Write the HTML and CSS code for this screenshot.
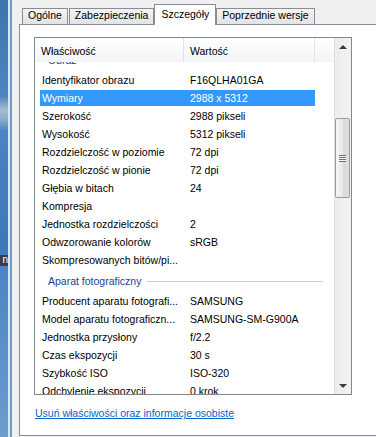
FILE: index.html
```html
<!DOCTYPE html>
<html lang="pl">
<head>
  <meta charset="UTF-8">
  <title>Właściwości: Szczegóły</title>
  <link rel="stylesheet" href="styles.css">
</head>
<body>
  <!-- krawędź okna -->
  <div class="frame">
    <div class="frame-glass"><span class="frame-label">n</span></div>
    <div class="frame-edge"></div>
  </div>

  <div class="dialog">
    <!-- zakładki -->
    <div class="tabs">
      <div class="tab tab-first">Ogólne</div>
      <div class="tab">Zabezpieczenia</div>
      <div class="tab tab-active">Szczegóły</div>
      <div class="tab">Poprzednie wersje</div>
    </div>

    <div class="panel">
      <div class="listview">
        <div class="list-main">
          <div class="list-header">
            <div class="col col-name">Właściwość</div>
            <div class="col col-value">Wartość</div>
            <div class="col col-rest"></div>
          </div>

          <div class="list-body">
            <div class="list-scroll">
              <div class="group"><span>Obraz</span><i class="group-line"></i></div>
              <div class="row"><span class="name">Identyfikator obrazu</span><span class="value">F16QLHA01GA</span></div>
              <div class="row selected"><span class="name">Wymiary</span><span class="value">2988 x 5312</span></div>
              <div class="row"><span class="name">Szerokość</span><span class="value">2988 pikseli</span></div>
              <div class="row"><span class="name">Wysokość</span><span class="value">5312 pikseli</span></div>
              <div class="row"><span class="name">Rozdzielczość w poziomie</span><span class="value">72 dpi</span></div>
              <div class="row"><span class="name">Rozdzielczość w pionie</span><span class="value">72 dpi</span></div>
              <div class="row"><span class="name">Głębia w bitach</span><span class="value">24</span></div>
              <div class="row"><span class="name">Kompresja</span><span class="value"></span></div>
              <div class="row"><span class="name">Jednostka rozdzielczości</span><span class="value">2</span></div>
              <div class="row"><span class="name">Odwzorowanie kolorów</span><span class="value">sRGB</span></div>
              <div class="row"><span class="name">Skompresowanych bitów/pi...</span><span class="value"></span></div>

              <div class="group"><span>Aparat fotograficzny</span><i class="group-line"></i></div>
              <div class="row"><span class="name">Producent aparatu fotografi...</span><span class="value">SAMSUNG</span></div>
              <div class="row"><span class="name">Model aparatu fotograficzn...</span><span class="value">SAMSUNG-SM-G900A</span></div>
              <div class="row"><span class="name">Jednostka przysłony</span><span class="value">f/2.2</span></div>
              <div class="row"><span class="name">Czas ekspozycji</span><span class="value">30 s</span></div>
              <div class="row"><span class="name">Szybkość ISO</span><span class="value">ISO-320</span></div>
              <div class="row"><span class="name">Odchylenie ekspozycji</span><span class="value">0 krok</span></div>
            </div>
          </div>
        </div>

        <!-- pasek przewijania -->
        <div class="scrollbar">
          <div class="sb-btn"><span class="arrow-up"></span></div>
          <div class="sb-track">
            <div class="sb-thumb"><span class="grip"></span></div>
          </div>
          <div class="sb-btn"><span class="arrow-down"></span></div>
        </div>
      </div>

      <a class="remove-link" href="#">Usuń właściwości oraz informacje osobiste</a>
    </div>
  </div>
</body>
</html>
```

FILE: styles.css
```css
body {
  font-family: "Segoe UI", "Liberation Sans", Arial, sans-serif;
  font-size: 10.5px;
  color: #000;
  background-color: #f0f0f0;
  margin: 0;
  width: 376px;
  height: 437px;
  overflow: hidden;
  display: flex;
}
.frame {
  display: flex;
  width: 12px;
  flex-shrink: 0;
}
.frame-glass {
  width: 8px;
  background: linear-gradient(to bottom, #3f75ae 0, #4d84bf 22%, #a4bccf 25%, #8fb0cc 27%, #4a84c2 30%, #3d78b8 57%, #4c86c3 62%, #6d9cce 100%);
}
.frame-label {
  display: block;
  margin-top: 255px;
  height: 11px;
  background-color: #3a3f46;
  color: #fff;
  font-size: 10px;
  line-height: 10px;
  text-align: right;
  overflow: hidden;
}
.frame-edge {
  width: 4px;
  background: linear-gradient(to right, #d9e5f1 0, #d9e5f1 2px, #6f98c6 2px, #6f98c6 4px);
}
.dialog {
  flex: 1;
  min-width: 0;
  padding: 4px 0 0 7px;
}
.tabs {
  display: flex;
  align-items: flex-end;
  height: 20px;
  padding-left: 3px;
}
.tab {
  height: 14px;
  padding: 0 5px 1px;
  line-height: 13px;
  border: 1px solid #898c95;
  border-bottom: none;
  background: linear-gradient(#f4f4f4, #e2e3e5);
  color: #000;
  white-space: nowrap;
}
.tab-first {
  margin-right: 1px;
}
.tab-active {
  position: relative;
  z-index: 1;
  height: 20px;
  line-height: 18px;
  padding: 0 6px;
  margin-bottom: -1px;
  background: #fff;
}
.panel {
  box-sizing: border-box;
  height: 412px;
  margin-right: -20px;
  padding: 12px 0 0 14px;
  border: 1px solid #898c95;
  background-color: #fff;
}
.listview {
  box-sizing: border-box;
  width: 318px;
  height: 358px;
  border: 1px solid #828790;
  display: flex;
}
.list-main {
  flex: 1;
  min-width: 0;
}
.list-header {
  display: flex;
  height: 24px;
  background: linear-gradient(#ffffff, #f3f4f6);
}
.col {
  box-sizing: border-box;
  padding: 2px 0 0 6px;
  line-height: 22px;
  border-right: 1px solid #e1e3e6;
  white-space: nowrap;
}
.col-name {
  width: 149px;
}
.col-value {
  width: 131px;
}
.col-rest {
  flex: 1;
  border-right: none;
}
.list-body {
  height: 332px;
  overflow: hidden;
}
.list-scroll {
  margin-top: -14px;
}
.group {
  display: flex;
  align-items: center;
  box-sizing: border-box;
  height: 23px;
  margin-left: 5px;
  padding: 5px 11px 4px 8px;
  line-height: 14px;
  color: #1e3d96;
}
.group-line {
  flex: 1;
  height: 1px;
  margin-left: 6px;
  background-color: #c9d0dd;
}
.row {
  display: flex;
  width: 275px;
  height: 18px;
  margin-left: 5px;
  line-height: 18px;
  white-space: nowrap;
}
.row .name {
  width: 146px;
  padding-left: 2px;
  overflow: hidden;
}
.row .value {
  flex: 1;
  padding-left: 2px;
  overflow: hidden;
}
.row.selected {
  background: linear-gradient(transparent 1px, #3399ff 1px, #3399ff 17px, transparent 17px);
  color: #fff;
}
.scrollbar {
  width: 17px;
  display: flex;
  flex-direction: column;
  background: linear-gradient(to right, #e0e0e0 0, #e0e0e0 1px, #ececec 1px, #f2f2f2);
}
.sb-btn {
  height: 17px;
  display: flex;
  align-items: center;
  justify-content: center;
}
.arrow-up {
  border-left: 4px solid transparent;
  border-right: 4px solid transparent;
  border-bottom: 4px solid #3c3c3c;
}
.arrow-down {
  border-left: 4px solid transparent;
  border-right: 4px solid transparent;
  border-top: 4px solid #3c3c3c;
}
.sb-track {
  flex: 1;
  padding-top: 63px;
}
.sb-thumb {
  box-sizing: border-box;
  height: 80px;
  margin: 0 1px;
  border: 1px solid #9c9c9c;
  border-radius: 2px;
  background: linear-gradient(to right, #f6f6f6, #e8e8e8 50%, #d9d9d9 51%, #dedede);
  display: flex;
  align-items: center;
  justify-content: center;
}
.grip {
  width: 7px;
  height: 7px;
  background: repeating-linear-gradient(#707070 0, #707070 1px, #f4f4f4 1px, #f4f4f4 2px);
}
.remove-link {
  display: inline-block;
  margin: 11px 0 0 1px;
  line-height: 14px;
  color: #0066cc;
  text-decoration: underline;
}
```
